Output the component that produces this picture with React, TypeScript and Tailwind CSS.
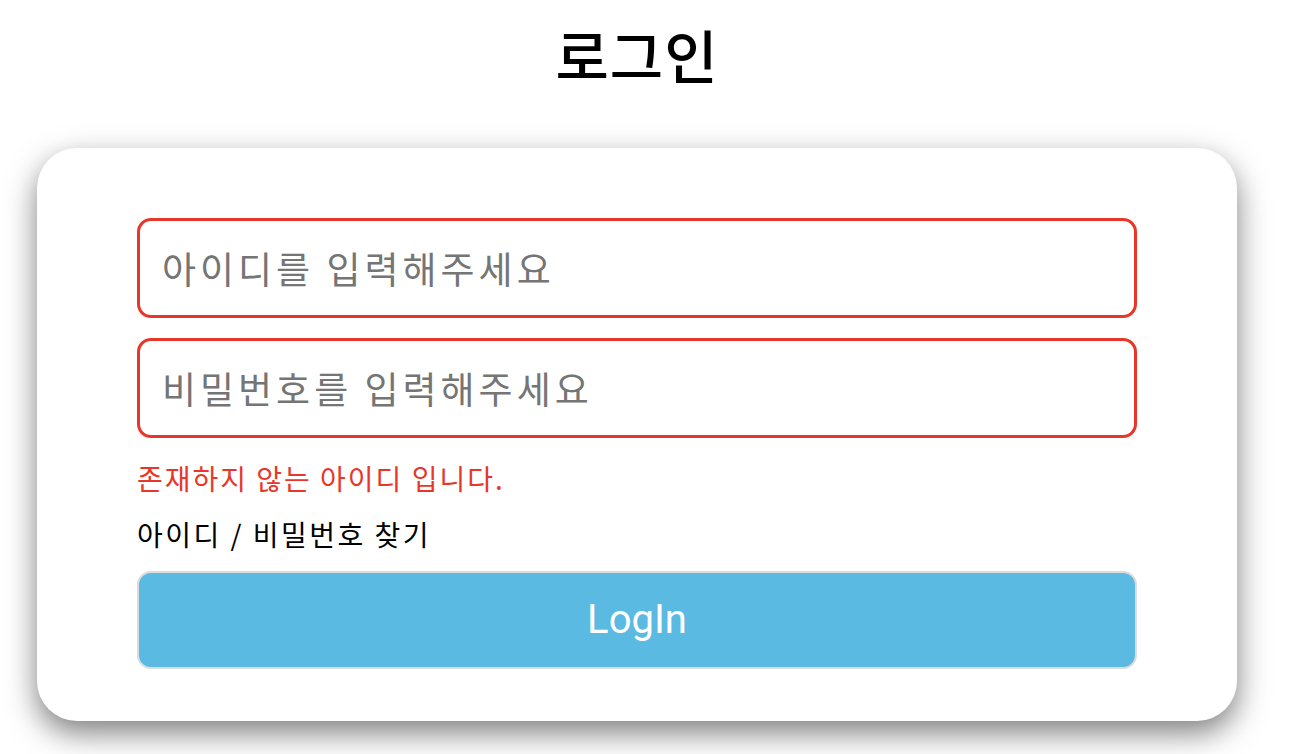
export default function App() {
  return (
    <div className="min-h-screen bg-white font-['Noto_Sans_CJK_KR','Noto_Sans',sans-serif] text-black">
      <div className="ml-[37px] w-[1200px]">
        <h1 className="pt-[14px] text-center text-[58px] leading-[80px] font-medium tracking-[1px]">로그인</h1>
        <div className="mt-[54px] rounded-[40px] bg-white px-[100px] pt-[70px] pb-[52px] shadow-[0_12px_30px_rgba(0,0,0,0.5)]">
          <form className="flex flex-col" onSubmit={(e) => e.preventDefault()}>
            <input
              type="text"
              placeholder="아이디를 입력해주세요"
              className="h-[100px] w-full rounded-[14px] border-[3px] border-[#e8372a] px-[22px] text-[37px] tracking-[4px] outline-none placeholder:text-[#757575]"
            />
            <input
              type="password"
              placeholder="비밀번호를 입력해주세요"
              className="mt-[20px] h-[100px] w-full rounded-[14px] border-[3px] border-[#e8372a] px-[22px] text-[37px] tracking-[4px] outline-none placeholder:text-[#757575]"
            />
            <p className="mt-[20px] text-[28px] leading-[40px] tracking-[2px] text-[#e8372a]">존재하지 않는 아이디 입니다.</p>
            <a href="#" className="mt-[16px] text-[28px] leading-[40px] tracking-[2.5px] text-black">아이디 / 비밀번호 찾기</a>
            <button
              type="submit"
              className="mt-[17px] h-[98px] w-full rounded-[14px] border-2 border-[#dcdcdc] bg-[#5bbae2] font-['Roboto',sans-serif] text-[40px] text-white"
            >
              LogIn
            </button>
          </form>
        </div>
      </div>
    </div>
  );
}
